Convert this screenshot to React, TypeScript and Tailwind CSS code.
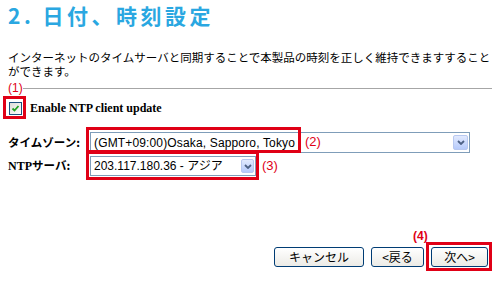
import { ReactNode } from "react";

const RED = "text-[#e00016]";

const Chevron = () => (
  <svg width="8" height="5" viewBox="0 0 8 5" className="block">
    <path d="M1 1 L4 4 L7 1" fill="none" stroke="#4d6185" strokeWidth="1.8" />
  </svg>
);

const DropButton = ({ className }: { className: string }) => (
  <div
    className={`flex items-center justify-center rounded-[2px] border border-[#b8c8f0] bg-gradient-to-b from-[#e2eafe] to-[#b6cafb] ${className}`}
  >
    <Chevron />
  </div>
);

const XpButton = ({ children, className }: { children: ReactNode; className: string }) => (
  <button
    className={`flex h-[20px] items-center justify-center rounded-[3px] border border-[#003c74] bg-gradient-to-b from-white to-[#ecebe6] text-[12px] leading-none text-black ${className}`}
  >
    {children}
  </button>
);

const RedBox = ({ className }: { className: string }) => (
  <div className={`pointer-events-none absolute border-[3px] border-[#e00016] ${className}`} />
);

export default function App() {
  return (
    <div className="relative h-[282px] w-[500px] overflow-hidden bg-white font-['Noto_Sans_CJK_JP',sans-serif] text-black">
      <h1 className="pl-2 pt-[2px] text-[21px] font-bold leading-[26px] tracking-[3.5px] text-[#2aa7e1]">
        2. 日付、時刻設定
      </h1>

      <p className="mt-[22px] whitespace-nowrap pl-2 text-[11.5px] leading-[14px]">
        インターネットのタイムサーバと同期することで本製品の時刻を正しく維持できますすること
        <br />
        ができます。
      </p>

      <div className="mt-[4px] flex items-center pl-2 pr-2">
        <span className={`text-[12px] leading-[12px] ${RED} font-['Liberation_Sans',sans-serif]`}>(1)</span>
        <div className="h-px flex-1 bg-[#a6a6a6]" />
      </div>

      <div className="relative mt-[3px] flex h-[22px] items-center pl-[9px]">
        <RedBox className="left-[3px] top-[-1px] h-[23px] w-[23px]" />
        <div className="flex h-[13px] w-[13px] items-center justify-center border border-[#1c5180] bg-gradient-to-br from-[#dcdcd7] to-white">
          <svg width="9" height="9" viewBox="0 0 9 9">
            <path d="M1.5 4.5 L3.5 6.5 L7.5 2" fill="none" stroke="#21a121" strokeWidth="1.8" />
          </svg>
        </div>
        <span className="ml-[8px] font-['Liberation_Serif',serif] text-[12px] font-bold">
          Enable NTP client update
        </span>
      </div>

      <div className="relative mt-[13px] flex h-[21px] items-center pl-2">
        <RedBox className="left-[86px] top-[-5px] h-[26px] w-[215px]" />
        <span className="w-[82px] text-[11.5px] font-bold">タイムゾーン:</span>
        <div className="flex h-[21px] w-[380px] items-center justify-between border border-[#7f9db9] pl-[3px] pr-[1px]">
          <span className="font-['Liberation_Sans',sans-serif] text-[12px] tracking-[0.15px]">(GMT+09:00)Osaka, Sapporo, Tokyo</span>
          <DropButton className="h-[15px] w-[15px]" />
        </div>
        <span className={`absolute left-[305px] top-[2px] font-['Liberation_Sans',sans-serif] text-[13px] leading-[16px] ${RED}`}>(2)</span>
      </div>

      <div className="relative mt-[3px] flex h-[20px] items-center pl-2">
        <RedBox className="left-[86px] top-[-5px] h-[29px] w-[173px]" />
        <span className="w-[82px] text-[11.5px] font-bold">
          <span className="font-['Liberation_Serif',serif] text-[12px]">NTP</span>サーバ:
        </span>
        <div className="flex h-[20px] w-[166px] items-center justify-between border border-[#7f9db9] pl-[3px] pr-[1px]">
          <span className="font-['Liberation_Sans','Noto_Sans_CJK_JP',sans-serif] text-[12px]">203.117.180.36 - アジア</span>
          <DropButton className="h-[14px] w-[13px]" />
        </div>
        <span className={`absolute left-[262px] top-[2px] font-['Liberation_Sans',sans-serif] text-[13px] leading-[16px] ${RED}`}>(3)</span>
      </div>

      <div className="relative mt-[71px] flex justify-end gap-[7px] pr-[12px]">
        <XpButton className="w-[90px]">キャンセル</XpButton>
        <XpButton className="w-[53px]">&lt;戻る</XpButton>
        <div className="relative">
          <RedBox className="left-[-5px] top-[-5px] h-[29px] w-[66px]" />
          <span className={`absolute left-[-18px] top-[-17px] font-['Liberation_Sans',sans-serif] text-[12px] font-bold leading-[12px] ${RED}`}>(4)</span>
          <XpButton className="w-[57px]">次へ&gt;</XpButton>
        </div>
      </div>
    </div>
  );
}
